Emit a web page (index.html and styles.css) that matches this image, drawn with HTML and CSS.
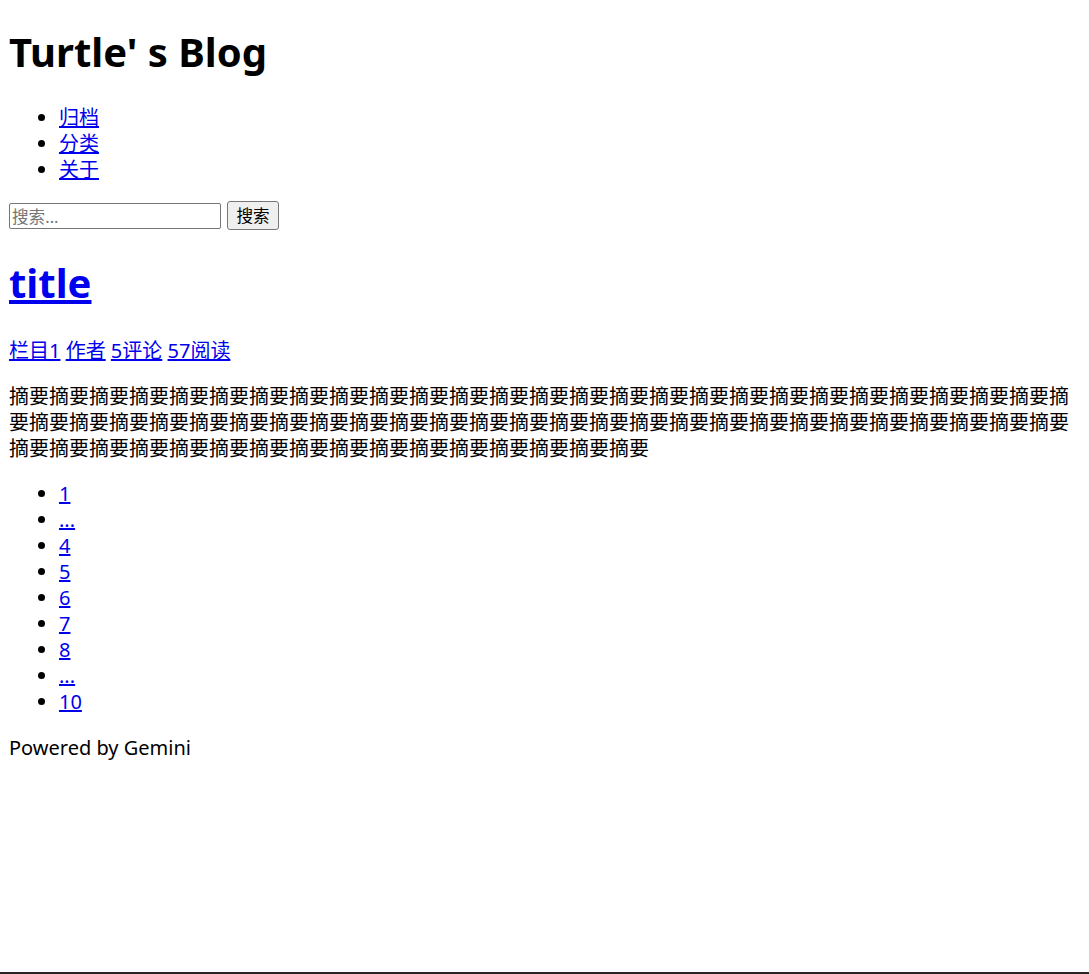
FILE: index.html
```html
<!DOCTYPE html>
<html lang="zh-CN">
<head>
<meta charset="utf-8">
<title>Turtle' s Blog</title>
<link rel="stylesheet" href="styles.css">
</head>
<body>
<header class="site-header">
  <h1 class="site-title">Turtle' s Blog</h1>
  <nav class="site-nav">
    <ul class="nav-list">
      <li><a href="#">归档</a></li>
      <li><a href="#">分类</a></li>
      <li><a href="#">关于</a></li>
    </ul>
  </nav>
  <form class="search-form">
    <input class="search-input" type="text" placeholder="搜索..."> <button class="search-button" type="button">搜索</button>
  </form>
</header>
<main class="content">
  <article class="post">
    <h2 class="post-title"><a href="#">title</a></h2>
    <p class="post-meta"><a href="#">栏目1</a> <a href="#">作者</a> <a href="#">5评论</a> <a href="#">57阅读</a></p>
    <p class="post-summary">摘要摘要摘要摘要摘要摘要摘要摘要摘要摘要摘要摘要摘要摘要摘要摘要摘要摘要摘要摘要摘要摘要摘要摘要摘要摘要摘要摘要摘要摘要摘要摘要摘要摘要摘要摘要摘要摘要摘要摘要摘要摘要摘要摘要摘要摘要摘要摘要摘要摘要摘要摘要摘要摘要摘要摘要摘要摘要摘要摘要摘要摘要摘要摘要摘要摘要摘要摘要摘要</p>
  </article>
  <ul class="pagination">
    <li><a href="#">1</a></li>
    <li><a href="#">...</a></li>
    <li><a href="#">4</a></li>
    <li><a href="#">5</a></li>
    <li><a href="#">6</a></li>
    <li><a href="#">7</a></li>
    <li><a href="#">8</a></li>
    <li><a href="#">...</a></li>
    <li><a href="#">10</a></li>
  </ul>
</main>
<footer class="site-footer">
  <p class="footer-text">Powered by Gemini</p>
</footer>
<div class="window-edge"></div>
</body>
</html>
```

FILE: styles.css
```css
html {
  background: #fff;
}

body {
  margin: 10px 10px 10px 9px;
  font-family: "Noto Sans", "Noto Sans CJK SC", sans-serif;
  font-size: 20px;
  line-height: 26px;
  color: #000;
}

a {
  color: #0000ee;
}

.site-title {
  font-size: 40px;
  line-height: 53px;
  margin: 14.8px 0 26.8px;
  font-weight: 700;
}

.nav-list,
.pagination {
  margin: 20px 0;
  padding-left: 50px;
  list-style: disc;
}

.nav-list {
  margin-bottom: 18px;
}

.pagination {
  margin-top: 19px;
}

.search-form {
  margin: 0;
  height: 29px;
  display: flex;
  align-items: center;
  gap: 6px;
}

.search-input {
  box-sizing: border-box;
  width: 212px;
  height: 26px;
  margin: 2px 0 0;
  padding: 1px 2px;
  border: 1px solid #767676;
  border-radius: 2px;
  font-family: inherit;
  font-size: 16.6px;
  color: #000;
  background: #fff;
}

.search-input::placeholder {
  color: #757575;
}

.search-button {
  box-sizing: border-box;
  width: 52px;
  height: 29px;
  margin: 0;
  padding: 0;
  border: 1px solid #767676;
  border-radius: 3px;
  background: #efefef;
  font-family: inherit;
  font-size: 16.6px;
  color: #000;
}

.post-title {
  font-size: 40px;
  line-height: 53px;
  margin: 26.8px 0 28.8px;
  font-weight: 700;
}

.post-meta,
.post-summary,
.footer-text {
  margin: 20px 0;
}

.post-summary {
  margin-bottom: 19px;
}

.window-edge {
  position: fixed;
  left: 0;
  right: 0;
  bottom: 0;
  height: 2px;
  background: #262626;
}
```
